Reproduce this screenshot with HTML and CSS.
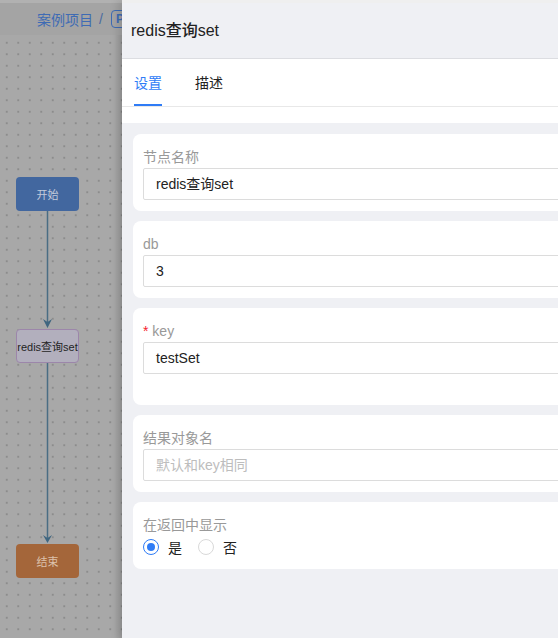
FILE: index.html
```html
<!DOCTYPE html>
<html lang="zh">
<head>
<meta charset="utf-8">
<title>redis查询set</title>
<link rel="stylesheet" href="styles.css">
</head>
<body>
<div class="app">
  <section class="canvas">
    <div class="topbar">
      <span class="crumb">案例项目</span>
      <span class="sep">/</span>
      <span class="badge">P</span>
    </div>
    <div class="board">
      <svg class="edges" width="122" height="603" viewBox="0 0 122 603">
        <line x1="47.5" y1="176" x2="47.5" y2="289" stroke="#4a6d84" stroke-width="1.5"/>
        <polygon points="43,284 47.5,287 52,284 47.5,293" fill="#3f6680"/>
        <line x1="47.5" y1="328" x2="47.5" y2="504" stroke="#4a6d84" stroke-width="1.5"/>
        <polygon points="43,500 47.5,503 52,500 47.5,508" fill="#3f6680"/>
      </svg>
      <div class="node node-start">开始</div>
      <div class="node node-redis">redis查询set</div>
      <div class="node node-end">结束</div>
    </div>
  </section>

  <aside class="drawer">
    <header class="drawer-head">redis查询set</header>
    <nav class="tabs">
      <span class="tab active">设置</span>
      <span class="tab">描述</span>
    </nav>
    <div class="drawer-body">
      <div class="card">
        <label class="label">节点名称</label>
        <div class="input">redis查询set</div>
      </div>
      <div class="card">
        <label class="label">db</label>
        <div class="input">3</div>
      </div>
      <div class="card card-tall">
        <label class="label"><span class="req">*</span> key</label>
        <div class="input">testSet</div>
      </div>
      <div class="card">
        <label class="label">结果对象名</label>
        <div class="input placeholder">默认和key相同</div>
      </div>
      <div class="card">
        <label class="label">在返回中显示</label>
        <div class="radios">
          <span class="radio checked"><span class="dot"></span></span><span class="rtext">是</span>
          <span class="radio"></span><span class="rtext">否</span>
        </div>
      </div>
    </div>
  </aside>
</div>
</body>
</html>
```

FILE: styles.css
```css
* { box-sizing: border-box; }
html, body {
  margin: 0;
  padding: 0;
  width: 558px;
  height: 638px;
  overflow: hidden;
  font-family: "Liberation Sans", "Noto Sans CJK SC", sans-serif;
}
.app {
  display: flex;
  height: 638px;
}
.canvas {
  flex: 0 0 122px;
  border-top: 3px solid #b1b1b1;
  background: #a7a7a7;
  display: flex;
  flex-direction: column;
  overflow: hidden;
}
.topbar {
  height: 32px;
  flex: 0 0 32px;
  background: #a4a4a4;
  display: flex;
  align-items: center;
  padding-left: 37px;
  font-size: 14px;
  color: #3e6bb4;
  white-space: nowrap;
}
.sep { margin: 0 8px 0 6px; color: #4a6aa0; }
.badge {
  display: inline-flex;
  align-items: center;
  justify-content: center;
  width: 18px;
  height: 18px;
  border: 1.5px solid #3e6bb4;
  border-radius: 4px;
  font-size: 12px;
  font-weight: bold;
  color: #3e6bb4;
  flex: 0 0 auto;
}
.board {
  position: relative;
  flex: 1;
  background-color: #a8a8a8;
  background-image: radial-gradient(circle, #8c8c8c 0.7px, transparent 0.9px);
  background-size: 11.5px 11.5px;
  background-position: 1px 2px;
}
.board::after {
  content: "";
  position: absolute;
  top: 0; bottom: 0; right: 0;
  width: 8px;
  background: linear-gradient(to right, rgba(0,0,0,0), rgba(0,0,0,0.08));
}
.edges { position: absolute; left: 0; top: 0; }
.node {
  position: absolute;
  left: 16px;
  width: 63px;
  height: 34px;
  border-radius: 4px;
  display: flex;
  align-items: center;
  justify-content: center;
  font-size: 11px;
  white-space: nowrap;
}
.node-start { top: 142px; background: #42679f; color: #c3cbdb; }
.node-redis { top: 294px; background: #b2afbd; border: 1px solid #9c86aa; color: #1f1f1f; }
.node-end { top: 509px; background: #a4663a; color: #dcc1ab; }

.drawer {
  flex: 0 0 470px;
  border-top: 3px solid #efefef;
  background: #eff0f4;
  box-shadow: -4px 0 8px rgba(0,0,0,0.12);
  display: flex;
  flex-direction: column;
  position: relative;
}
.drawer-head {
  height: 56px;
  line-height: 55px;
  padding-left: 9px;
  font-size: 16px;
  font-weight: 500;
  color: #222;
  background: #eff0f4;
  border-bottom: 1px solid #dcdde1;
}
.tabs {
  display: flex;
  gap: 33px;
  padding: 0 12px;
  background: #fff;
  border-bottom: 1px solid #e8e8e8;
  box-shadow: 0 16px 0 #fff;
  margin-bottom: 16px;
}
.tab {
  padding: 13px 0 10px;
  line-height: 22px;
  font-size: 14px;
  color: #222;
  border-bottom: 2px solid transparent;
}
.tab.active { color: #2f7cf6; border-bottom-color: #2f7cf6; }
.drawer-body {
  padding: 11px 0 0 11px;
}
.card {
  background: #fff;
  border-radius: 8px;
  padding: 12px 10px 11px;
  margin-bottom: 10px;
}
.card-tall { padding-bottom: 31px; }
.label {
  display: block;
  font-size: 14px;
  line-height: 22px;
  color: #999;
}
.req { color: #f5222d; }
.input {
  height: 32px;
  border: 1px solid #dcdcdc;
  border-radius: 2px;
  padding: 0 12px;
  font-size: 14px;
  line-height: 30px;
  color: #222;
}
.input.placeholder { color: #bdbdbd; }
.radios {
  display: flex;
  align-items: center;
  height: 22px;
  font-size: 14px;
  color: #222;
}
.radio {
  width: 16px;
  height: 16px;
  border-radius: 50%;
  border: 1px solid #d9d9d9;
  display: inline-flex;
  align-items: center;
  justify-content: center;
}
.radio.checked { border-color: #2f7cf6; }
.dot { width: 8px; height: 8px; border-radius: 50%; background: #2f7cf6; }
.rtext { margin: 0 16px 0 9px; }
```
